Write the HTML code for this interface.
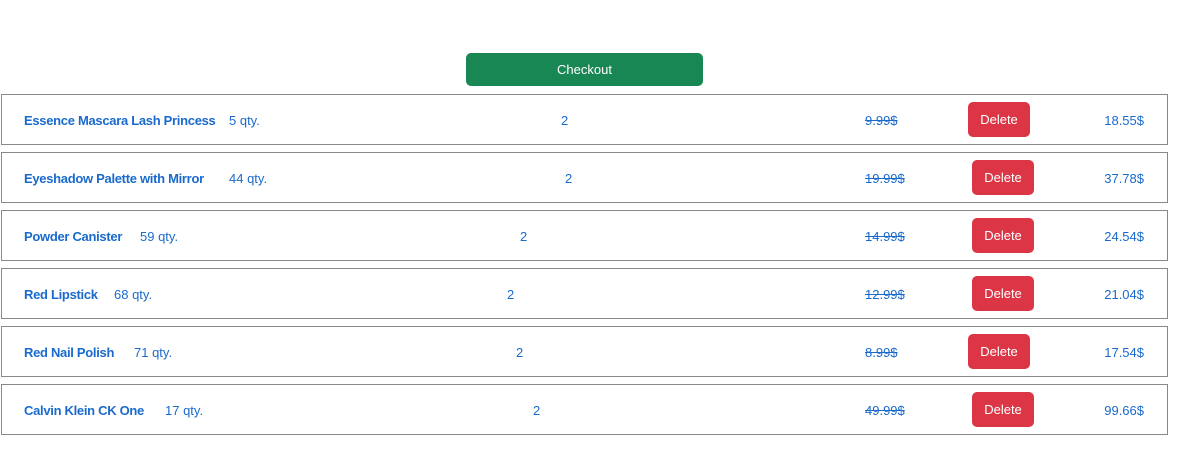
<!DOCTYPE html>
<html><head><style>
body{margin:0;width:1179px;height:452px;background:#fff;font-family:"Liberation Sans",sans-serif;font-size:13px;color:#1a6acd;position:relative;overflow:hidden}
.co{position:absolute;left:466px;top:53px;width:237px;height:33px;background:#198754;border-radius:5px;color:#fff;text-align:center;line-height:34px;font-size:13px}
.row{position:absolute;left:1px;width:1165px;height:49px;border:1px solid #888}
.row span{position:absolute;top:1px;line-height:49px;white-space:nowrap}
.n{left:22px;font-weight:bold;letter-spacing:-0.3px}
.p{left:863px;text-decoration:line-through}
.t{right:23px}
.d{top:7px!important;height:35px;line-height:35px!important;background:#dc3545;color:#fff;border-radius:5px;text-align:center;width:62px}
</style></head><body>
<div class="co">Checkout</div>
<div class="row" style="top:94px"><span class="n">Essence Mascara Lash Princess</span><span style="left:227px">5 qty.</span><span style="left:559px">2</span><span class="p">9.99$</span><span class="d" style="left:966px">Delete</span><span class="t">18.55$</span></div>
<div class="row" style="top:152px"><span class="n">Eyeshadow Palette with Mirror</span><span style="left:227px">44 qty.</span><span style="left:563px">2</span><span class="p">19.99$</span><span class="d" style="left:970px">Delete</span><span class="t">37.78$</span></div>
<div class="row" style="top:210px"><span class="n">Powder Canister</span><span style="left:138px">59 qty.</span><span style="left:518px">2</span><span class="p">14.99$</span><span class="d" style="left:970px">Delete</span><span class="t">24.54$</span></div>
<div class="row" style="top:268px"><span class="n">Red Lipstick</span><span style="left:112px">68 qty.</span><span style="left:505px">2</span><span class="p">12.99$</span><span class="d" style="left:970px">Delete</span><span class="t">21.04$</span></div>
<div class="row" style="top:326px"><span class="n">Red Nail Polish</span><span style="left:132px">71 qty.</span><span style="left:514px">2</span><span class="p">8.99$</span><span class="d" style="left:966px">Delete</span><span class="t">17.54$</span></div>
<div class="row" style="top:384px"><span class="n">Calvin Klein CK One</span><span style="left:163px">17 qty.</span><span style="left:531px">2</span><span class="p">49.99$</span><span class="d" style="left:970px">Delete</span><span class="t">99.66$</span></div>
</body></html>
